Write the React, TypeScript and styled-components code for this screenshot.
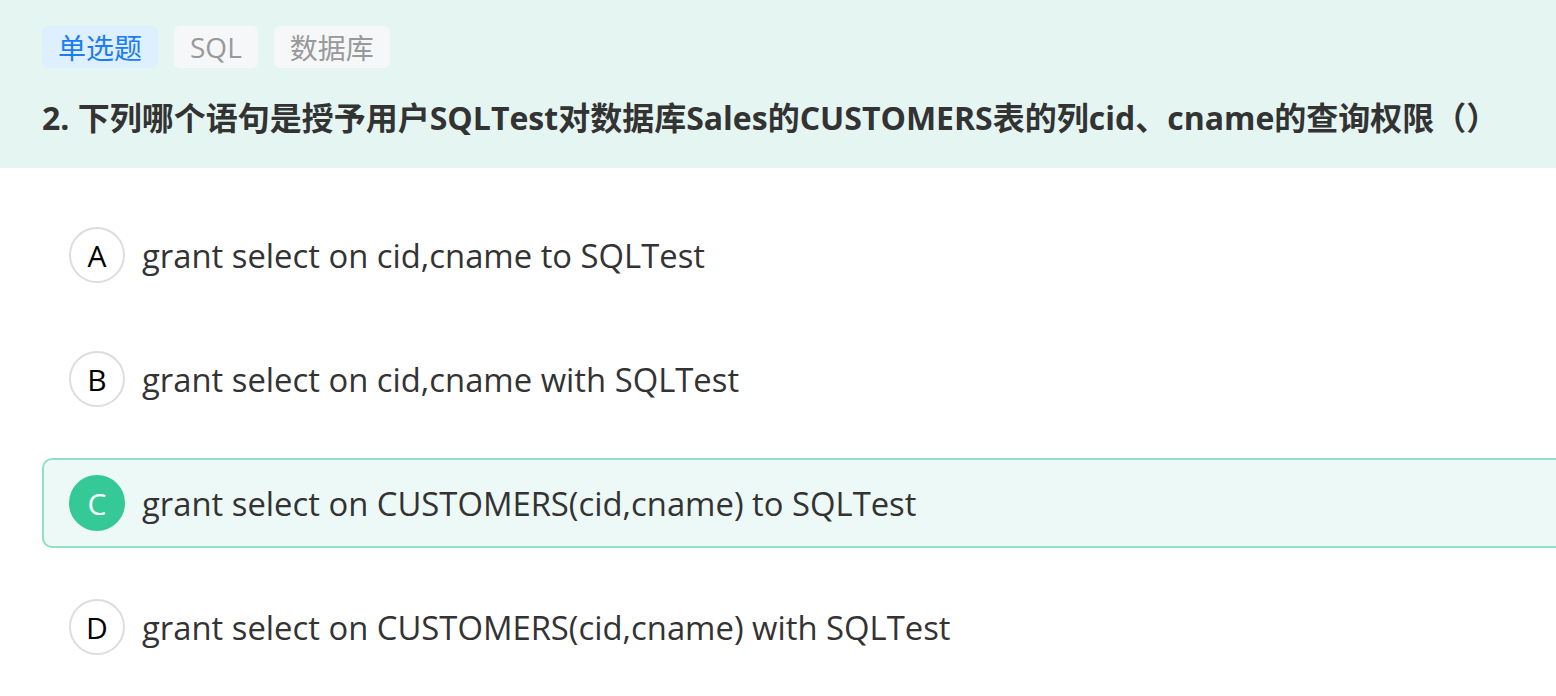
import React from 'react'
import styled, { createGlobalStyle } from 'styled-components'

const GlobalStyle = createGlobalStyle`
    html, body {
        margin: 0;
        padding: 0;
        background: #ffffff;
        overflow: hidden;
    }
    body {
        font-family: "Open Sans", "Noto Sans CJK SC", sans-serif;
        color: #333333;
    }
`

const Header = styled.section`
    background: #e5f6f2;
    height: 168px;
    box-sizing: border-box;
    padding: 26px 42px 0;
`
const TagRow = styled.div`
    display: flex;
    gap: 16px;
`
const Tag = styled.span<{ $primary?: boolean }>`
    height: 42px;
    display: flex;
    align-items: center;
    padding: 0 16px;
    border-radius: 6px;
    font-size: 28px;
    background: ${p => (p.$primary ? '#def0ff' : '#f5f7f9')};
    color: ${p => (p.$primary ? '#1a7cf7' : '#999999')};
`
const Title = styled.h2`
    margin: 28px 0 0;
    font-size: 32px;
    font-weight: 700;
    line-height: 44px;
    color: #333333;
    white-space: nowrap;
`
const Options = styled.ul`
    list-style: none;
    margin: 0;
    padding: 42px 0 0 42px;
    display: flex;
    flex-direction: column;
    gap: 34px;
    width: 1560px;
`
const Option = styled.li<{ $selected?: boolean }>`
    height: 90px;
    box-sizing: border-box;
    display: flex;
    align-items: center;
    gap: 17px;
    padding-left: 25px;
    border-radius: 10px;
    border: 2px solid ${p => (p.$selected ? '#90e0c6' : 'transparent')};
    background: ${p => (p.$selected ? '#edf9f6' : 'transparent')};
`
const Letter = styled.span<{ $selected?: boolean }>`
    width: 56px;
    height: 56px;
    flex: none;
    box-sizing: border-box;
    border-radius: 50%;
    display: flex;
    align-items: center;
    justify-content: center;
    font-size: 30px;
    border: 2px solid ${p => (p.$selected ? '#34c997' : '#dddddd')};
    background: ${p => (p.$selected ? '#34c997' : '#ffffff')};
    color: ${p => (p.$selected ? '#ffffff' : '#000000')};
`
const OptionText = styled.span`
    font-size: 32.8px;
    color: #333333;
`

const options = [
    { key: 'A', text: 'grant select on cid,cname to SQLTest' },
    { key: 'B', text: 'grant select on cid,cname with SQLTest' },
    { key: 'C', text: 'grant select on CUSTOMERS(cid,cname) to SQLTest' },
    { key: 'D', text: 'grant select on CUSTOMERS(cid,cname) with SQLTest' },
]

export default function App() {
    const selected = 'C'
    return (
        <>
            <GlobalStyle />
            <Header>
                <TagRow>
                    <Tag $primary>单选题</Tag>
                    <Tag>SQL</Tag>
                    <Tag>数据库</Tag>
                </TagRow>
                <Title>2. 下列哪个语句是授予用户SQLTest对数据库Sales的CUSTOMERS表的列cid、cname的查询权限（）</Title>
            </Header>
            <Options>
                {options.map(o => (
                    <Option key={o.key} $selected={o.key === selected}>
                        <Letter $selected={o.key === selected}>{o.key}</Letter>
                        <OptionText>{o.text}</OptionText>
                    </Option>
                ))}
            </Options>
        </>
    )
}
